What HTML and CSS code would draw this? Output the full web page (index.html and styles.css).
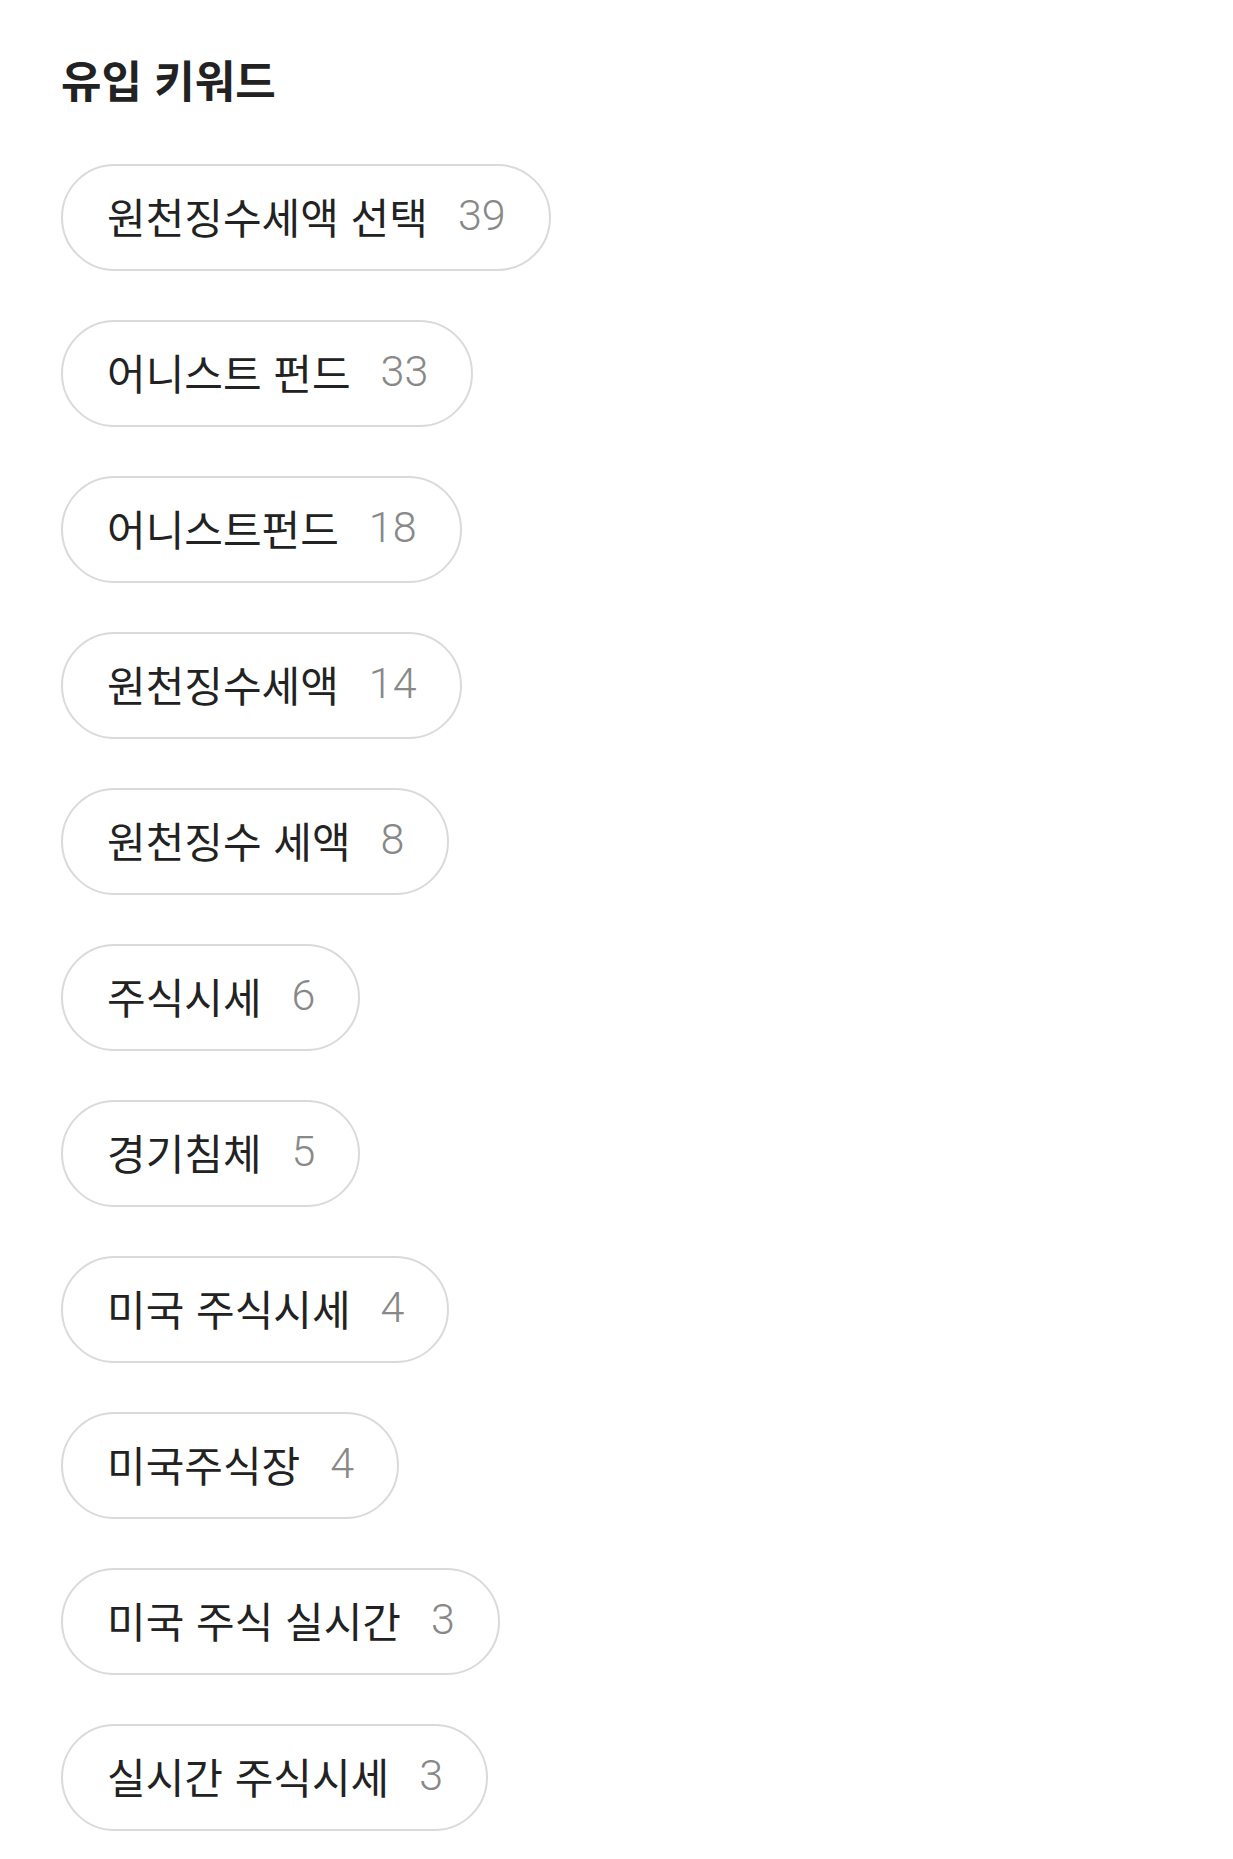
FILE: index.html
```html
<!DOCTYPE html>
<html lang="ko">

<head>
    <meta charset="UTF-8">
    <meta name="viewport" content="width=device-width, initial-scale=1.0">
    <title>유입 키워드</title>
    <link rel="stylesheet" href="styles.css">
</head>

<body>
    <section class="keywords">
        <h1 class="keywords-title">유입 키워드</h1>

        <ul class="keyword-list">
            <li class="keyword-chip"><span class="keyword-name">원천징수세액 선택</span><span class="keyword-count">39</span></li>
            <li class="keyword-chip"><span class="keyword-name">어니스트 펀드</span><span class="keyword-count">33</span></li>
            <li class="keyword-chip"><span class="keyword-name">어니스트펀드</span><span class="keyword-count">18</span></li>
            <li class="keyword-chip"><span class="keyword-name">원천징수세액</span><span class="keyword-count">14</span></li>
            <li class="keyword-chip"><span class="keyword-name">원천징수 세액</span><span class="keyword-count">8</span></li>
            <li class="keyword-chip"><span class="keyword-name">주식시세</span><span class="keyword-count">6</span></li>
            <li class="keyword-chip"><span class="keyword-name">경기침체</span><span class="keyword-count">5</span></li>
            <li class="keyword-chip"><span class="keyword-name">미국 주식시세</span><span class="keyword-count">4</span></li>
            <li class="keyword-chip"><span class="keyword-name">미국주식장</span><span class="keyword-count">4</span></li>
            <li class="keyword-chip"><span class="keyword-name">미국 주식 실시간</span><span class="keyword-count">3</span></li>
            <li class="keyword-chip"><span class="keyword-name">실시간 주식시세</span><span class="keyword-count">3</span></li>
        </ul>
    </section>
</body>

</html>
```

FILE: styles.css
```css
body {
    margin: 0;
    background-color: #ffffff;
    font-family: "Noto Sans CJK KR", "Noto Sans", sans-serif;
    color: #222222;
}

.keywords {
    padding: 48px 61px 0;
}

.keywords-title {
    margin: 0 0 54px;
    font-size: 44px;
    font-weight: 700;
    line-height: 62px;
    color: #222222;
}

/* List of keyword pills */
.keyword-list {
    display: flex;
    flex-direction: column;
    align-items: flex-start;
    gap: 49px;
    margin: 0;
    padding: 0;
    list-style: none;
}

.keyword-chip {
    display: inline-flex;
    align-items: center;
    box-sizing: border-box;
    height: 107px;
    padding: 0 43px 4px 44px;
    border: 2px solid #dadada;
    border-radius: 54px;
}

.keyword-name {
    font-size: 42px;
    line-height: 1;
    color: #222222;
}

.keyword-count {
    margin-left: 30px;
    font-family: Roboto, "Noto Sans", sans-serif;
    font-size: 43px;
    font-weight: 300;
    line-height: 1;
    color: #888888;
}
```
